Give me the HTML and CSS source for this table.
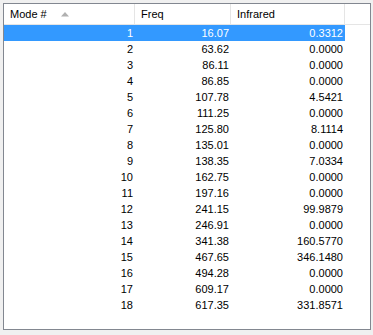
FILE: index.html
```html
<!DOCTYPE html>
<html>
<head>
<meta charset="utf-8">
<link rel="stylesheet" href="styles.css">
</head>
<body>
<div class="list">
  <div class="header">
    <div class="hcell c1">Mode #<svg class="sort" width="8" height="5" viewBox="0 0 8 5"><polygon points="4,0 8,4.5 0,4.5" fill="#b0b0b0"/></svg></div>
    <div class="hcell c2">Freq</div>
    <div class="hcell c3">Infrared</div>
    <div class="hcell c4"></div>
  </div>
  <div class="rows">
    <div class="row sel"><span>1</span><span>16.07</span><span>0.3312</span></div>
    <div class="row"><span>2</span><span>63.62</span><span>0.0000</span></div>
    <div class="row"><span>3</span><span>86.11</span><span>0.0000</span></div>
    <div class="row"><span>4</span><span>86.85</span><span>0.0000</span></div>
    <div class="row"><span>5</span><span>107.78</span><span>4.5421</span></div>
    <div class="row"><span>6</span><span>111.25</span><span>0.0000</span></div>
    <div class="row"><span>7</span><span>125.80</span><span>8.1114</span></div>
    <div class="row"><span>8</span><span>135.01</span><span>0.0000</span></div>
    <div class="row"><span>9</span><span>138.35</span><span>7.0334</span></div>
    <div class="row"><span>10</span><span>162.75</span><span>0.0000</span></div>
    <div class="row"><span>11</span><span>197.16</span><span>0.0000</span></div>
    <div class="row"><span>12</span><span>241.15</span><span>99.9879</span></div>
    <div class="row"><span>13</span><span>246.91</span><span>0.0000</span></div>
    <div class="row"><span>14</span><span>341.38</span><span>160.5770</span></div>
    <div class="row"><span>15</span><span>467.65</span><span>346.1480</span></div>
    <div class="row"><span>16</span><span>494.28</span><span>0.0000</span></div>
    <div class="row"><span>17</span><span>609.17</span><span>0.0000</span></div>
    <div class="row"><span>18</span><span>617.35</span><span>331.8571</span></div>
  </div>
</div>
</body>
</html>
```
FILE: styles.css
```css
html, body {
  margin: 0;
  padding: 0;
  background: #f0f0f0;
  width: 373px;
  height: 335px;
  overflow: hidden;
}
body {
  padding: 3px 0 0 3px;
  box-sizing: border-box;
  font-family: "Liberation Sans", Arial, sans-serif;
  font-size: 11px;
  color: #000;
}
.list {
  width: 368px;
  height: 327px;
  box-sizing: border-box;
  border: 1px solid #828790;
  background: #fff;
  overflow: hidden;
}
.header {
  display: grid;
  grid-template-columns: 131px 96px 114px 1fr;
  height: 21px;
  box-sizing: border-box;
  border-bottom: 1px solid #e5e5e5;
  background: #fff;
}
.hcell {
  display: flex;
  align-items: center;
  padding-left: 6px;
  border-right: 1px solid #e5e5e5;
  box-sizing: border-box;
  white-space: nowrap;
}
.hcell.c4 {
  border-right: none;
}
.sort {
  margin-left: 14px;
  margin-top: 0;
}
.row {
  display: grid;
  grid-template-columns: 131px 96px 114px;
  height: 16px;
  line-height: 16px;
}
.row span {
  text-align: right;
  padding-right: 2px;
}
.row.sel {
  width: 341px;
  background: #3399ff;
  color: #fff;
}
```
